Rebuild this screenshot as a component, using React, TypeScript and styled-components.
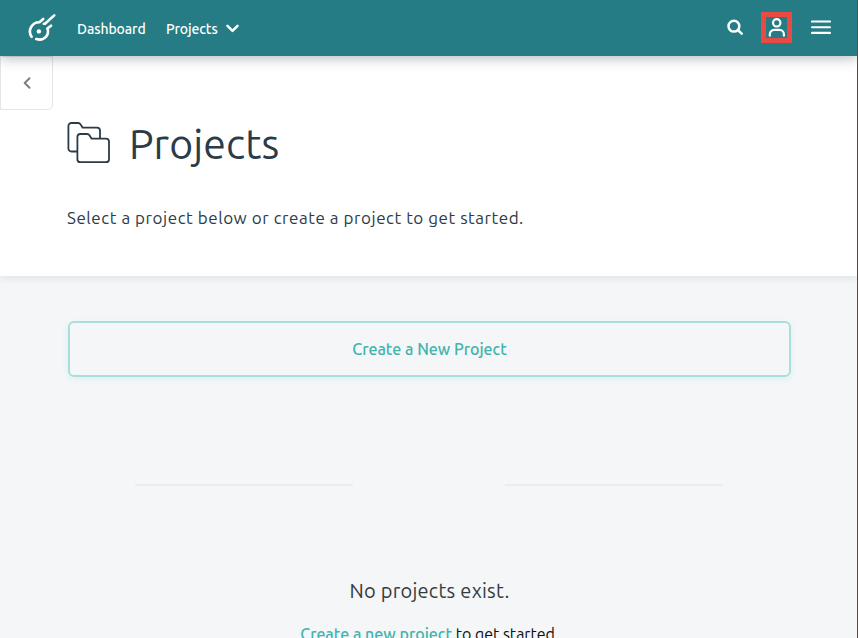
import React from "react";
import styled, { createGlobalStyle } from "styled-components";

const GlobalStyle = createGlobalStyle`
  * { box-sizing: border-box; }
  body { margin: 0; background: #f4f6f8; font-family: Ubuntu, "Noto Sans", "Open Sans", sans-serif; overflow: hidden; }
  button { font-family: inherit; background: none; border: 0; padding: 0; }
  svg { display: block; flex: none; }
`;

const Page = styled.div`
  height: 638px;
  overflow: hidden;
  display: flex;
  flex-direction: column;
  background: #f4f6f8;
  border-right: 1px solid #5b4a41;
`;

const TopBar = styled.header`
  flex: none;
  height: 56px;
  display: flex;
  align-items: center;
  padding: 0 26px 0 27px;
  background: #267c84;
  box-shadow: 0 2px 12px rgba(40, 50, 65, 0.35);
  position: relative;
  z-index: 2;
`;

const Nav = styled.nav`
  display: flex;
  align-items: center;
  margin-left: 21px;
  gap: 21px;
`;

const NavLink = styled.a<{ $width: number }>`
  width: ${(p) => p.$width}px;
  white-space: nowrap;
  color: #fff;
  font-size: 14px;
  font-weight: 500;
  line-height: 20px;
  letter-spacing: -0.1px;
  padding-top: 2px;
`;

const NavGroup = styled.div`
  display: flex;
  align-items: center;
  gap: 8px;
`;

const Actions = styled.div`
  margin-left: auto;
  padding-bottom: 2px;
  display: flex;
  align-items: center;
`;

const IconButton = styled.button<{ $gap?: number }>`
  margin-left: ${(p) => p.$gap ?? 0}px;
  color: #fff;
`;

const HighlightedButton = styled(IconButton)`
  width: 31px;
  height: 31px;
  border: 5px solid #ea4a44;
  display: grid;
  place-items: center;
`;

const Hero = styled.section`
  flex: none;
  height: 220px;
  background: #fff;
  box-shadow: 0 2px 8px rgba(40, 50, 65, 0.1);
`;

const BackButton = styled.button`
  width: 53px;
  height: 54px;
  border: 1px solid #e3e5e6;
  border-radius: 0 0 5px 0;
  display: grid;
  place-items: center;
  color: #7c8084;
`;

const TitleRow = styled.div`
  display: flex;
  align-items: center;
  height: 62px;
  margin: 2px 0 0 67px;
`;

const Title = styled.h1`
  margin: 0 0 0 18px;
  padding-top: 2px;
  color: #2b3b47;
  font-size: 41px;
  font-weight: 400;
  line-height: 54px;
  letter-spacing: 0.1px;
`;

const Lead = styled.p`
  margin: 31px 0 0 67px;
  color: #2b3b47;
  font-size: 17px;
  line-height: 26px;
  letter-spacing: 0.54px;
  white-space: nowrap;
`;

const Content = styled.main`
  padding: 45px 66px 0 68px;
`;

const CreateButton = styled.button`
  width: 100%;
  height: 56px;
  border: 2px solid #a8dfda;
  border-radius: 6px;
  box-shadow: 0 2px 6px rgba(60, 180, 170, 0.1);
  color: #41b3ac;
  font-size: 16px;
  font-weight: 500;
`;

const Dividers = styled.div`
  display: flex;
  justify-content: space-between;
  margin: 107px 68px 0 67px;
`;

const Divider = styled.div`
  width: 218px;
  height: 2px;
  background: #ebecee;
`;

const EmptyState = styled.div`
  display: flex;
  flex-direction: column;
  align-items: center;
  margin-top: 89px;
`;

const EmptyTitle = styled.h2`
  margin: 0;
  color: #363b40;
  font-size: 20px;
  font-weight: 400;
  line-height: 32px;
  letter-spacing: 0.26px;
`;

const EmptyText = styled.p`
  margin: 15px 0 0;
  color: #0c0e10;
  font-size: 16px;
  line-height: 24px;
  white-space: nowrap;
`;

const EmptyLink = styled.a`
  color: #41b3ac;
  font-weight: 500;
`;

const Logo = () => (
  <svg width="29" height="28" viewBox="0 0 29 28" fill="none" stroke="#fff" strokeWidth="2.6" strokeLinecap="round" strokeLinejoin="round">
    <path d="M4.6 22.8A9.3 9.3 0 0 1 12.4 8.2L16.2 5" />
    <path d="M16.8 9.8H18L27.2 1.4" />
    <path d="M24 11.7L20.4 14.6C22.6 20.5 18 27.5 9.2 25.1" />
    <circle cx="11.9" cy="17.4" r="2.2" fill="#fff" stroke="none" />
  </svg>
);

const Folders = () => (
  <svg width="44" height="42" viewBox="0 0 44 42" fill="none" stroke="#2b3b47" strokeWidth="1.8" strokeLinejoin="round">
    <path d="M10 29.5H4.4A3 3 0 0 1 1.4 26.5V4A3 3 0 0 1 4.4 1H11.2Q12.7 1 13.6 2.4L15.7 5.7H30A3 3 0 0 1 33 8.7V16" />
    <path d="M13.4 12H20.2Q21.7 12 22.6 13.4L24.7 16.7H39A3 3 0 0 1 42 19.7V37.2A3 3 0 0 1 39 40.2H13.4A3 3 0 0 1 10.4 37.2V15A3 3 0 0 1 13.4 12Z" />
  </svg>
);

export default function App() {
  return (
    <Page>
      <GlobalStyle />
      <TopBar>
        <Logo />
        <Nav>
          <NavLink $width={68}>Dashboard</NavLink>
          <NavGroup>
            <NavLink $width={52}>Projects</NavLink>
            <svg width="13" height="9" viewBox="0 0 13 9" fill="none" stroke="#fff" strokeWidth="2.5" strokeLinecap="round" strokeLinejoin="round">
              <path d="M1.5 1.8L6.5 6.8L11.5 1.8" />
            </svg>
          </NavGroup>
        </Nav>
        <Actions>
          <IconButton aria-label="Search">
            <svg width="17" height="16" viewBox="0 0 17 16" fill="none" stroke="#fff" strokeWidth="2.5" strokeLinecap="round">
              <circle cx="6.9" cy="7.2" r="5.4" />
              <path d="M11 11.3L14.7 14.6" />
            </svg>
          </IconButton>
          <HighlightedButton $gap={17} aria-label="Account">
            <svg width="17" height="19" viewBox="0 0 17 19" fill="none" stroke="#fff" strokeWidth="2.2" strokeLinecap="round">
              <circle cx="8.7" cy="4.8" r="3.7" />
              <path d="M1.8 17.7V16.2A4.3 4.3 0 0 1 6.1 11.9H11.6A4.3 4.3 0 0 1 15.9 16.2V17.7" />
            </svg>
          </HighlightedButton>
          <IconButton $gap={19} aria-label="Menu">
            <svg width="20" height="14" viewBox="0 0 20 14" stroke="#fff" strokeWidth="2.1" strokeLinecap="round">
              <path d="M1 1.5H19M1 7.2H19M1 12.9H19" />
            </svg>
          </IconButton>
        </Actions>
      </TopBar>
      <Hero>
        <BackButton aria-label="Back">
          <svg width="8" height="12" viewBox="0 0 8 12" fill="none" stroke="currentColor" strokeWidth="2" strokeLinecap="round" strokeLinejoin="round">
            <path d="M6.5 1.2L1.7 6L6.5 10.8" />
          </svg>
        </BackButton>
        <TitleRow>
          <Folders />
          <Title>Projects</Title>
        </TitleRow>
        <Lead>Select a project below or create a project to get started.</Lead>
      </Hero>
      <Content>
        <CreateButton>Create a New Project</CreateButton>
        <Dividers>
          <Divider />
          <Divider />
        </Dividers>
        <EmptyState>
          <EmptyTitle>No projects exist.</EmptyTitle>
          <EmptyText>
            <EmptyLink>Create a new project</EmptyLink> to get started.
          </EmptyText>
        </EmptyState>
      </Content>
    </Page>
  );
}
